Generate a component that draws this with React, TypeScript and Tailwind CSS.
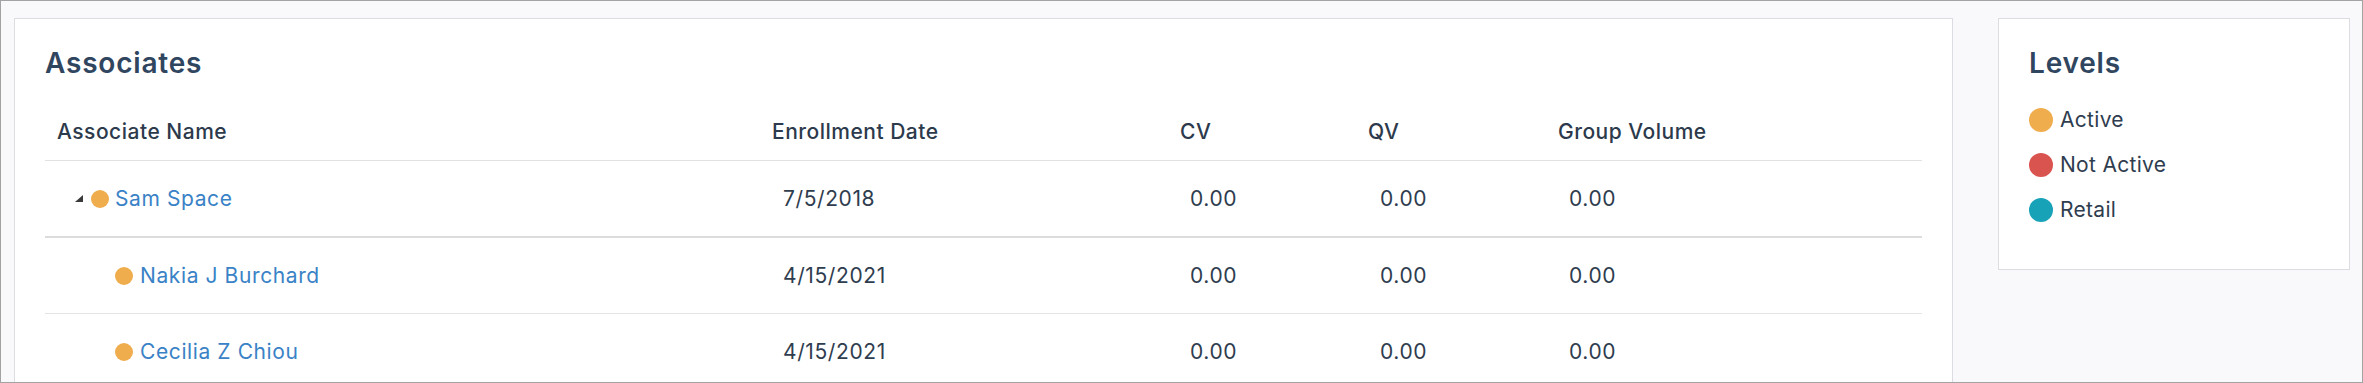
import React from 'react'

type Row = {
  name: string
  date: string
  cv: string
  qv: string
  gv: string
  root?: boolean
}

const rows: Row[] = [
  { name: 'Sam Space', date: '7/5/2018', cv: '0.00', qv: '0.00', gv: '0.00', root: true },
  { name: 'Nakia J Burchard', date: '4/15/2021', cv: '0.00', qv: '0.00', gv: '0.00' },
  { name: 'Cecilia Z Chiou', date: '4/15/2021', cv: '0.00', qv: '0.00', gv: '0.00' },
]

const levels = [
  { label: 'Active', color: 'bg-[#f0ad4e]' },
  { label: 'Not Active', color: 'bg-[#d9534f]' },
  { label: 'Retail', color: 'bg-[#17a2b8]' },
]

const cols = 'grid grid-cols-[715px_408px_188px_190px_1fr]'

export default function App() {
  return (
    <div
      className="flex h-[383px] w-full items-start gap-[45px] overflow-hidden border border-[#a3a3a3] bg-[#f9f9fb] pl-[13px] pr-[12px] pt-[17px] text-[#2f3d4f]"
      style={{ fontFamily: 'Inter, "Noto Sans", sans-serif' }}
    >
      {/* Associates */}
      <div className="flex-1 border border-[#dcdde2] bg-white px-[30px] pt-[26px] pb-[40px]">
        <h2 className="text-[28px] font-semibold leading-[36px] tracking-[0.8px] text-[#30465f]">Associates</h2>

        <div className={`${cols} mt-[37px] border-b border-[#e2e2e2] pb-[14px] text-[21px] font-medium leading-[28px] tracking-[0.5px] text-[#2c3a4c]`}>
          <div className="px-[12px]">Associate Name</div>
          <div className="px-[12px]">Enrollment Date</div>
          <div className="px-[12px]">CV</div>
          <div className="px-[12px]">QV</div>
          <div className="px-[12px]">Group Volume</div>
        </div>

        {rows.map((r, i) => (
          <div
            key={r.name}
            className={`${cols} items-center text-[21px] leading-[28px] tracking-[0.6px] ${
              i === 0 ? 'h-[77px] border-b-2 border-[#dcdcdc]' : 'h-[76px] border-b border-[#e4e4e4]'
            }`}
          >
            <div className="flex items-center pl-[12px]">
              {r.root ? (
                <>
                  <svg className="ml-[18px] mr-[8px]" width="8" height="7" viewBox="0 0 8 7">
                    <polygon points="8,0 8,7 0,7" fill="#3a3a3a" />
                  </svg>
                  <span className="mr-[6px] h-[18px] w-[18px] rounded-full bg-[#f0ad4e]" />
                </>
              ) : (
                <span className="ml-[58px] mr-[7px] h-[18px] w-[18px] rounded-full bg-[#f0ad4e]" />
              )}
              <a className="text-[#3a82c6]">{r.name}</a>
            </div>
            <div className="pl-[23px]">{r.date}</div>
            <div className="pl-[22px]">{r.cv}</div>
            <div className="pl-[24px]">{r.qv}</div>
            <div className="pl-[23px]">{r.gv}</div>
          </div>
        ))}
      </div>

      {/* Levels */}
      <div className="w-[352px] border border-[#dcdde2] bg-white px-[30px] pt-[26px] pb-[37px]">
        <h2 className="text-[28px] font-semibold leading-[36px] tracking-[0.8px] text-[#30465f]">Levels</h2>
        <ul className="mt-[16px]">
          {levels.map((l) => (
            <li key={l.label} className="flex h-[45px] items-center gap-[7px] text-[21px] leading-[28px] tracking-[0.3px]">
              <span className={`h-[24px] w-[24px] rounded-full ${l.color}`} />
              {l.label}
            </li>
          ))}
        </ul>
      </div>
    </div>
  )
}
